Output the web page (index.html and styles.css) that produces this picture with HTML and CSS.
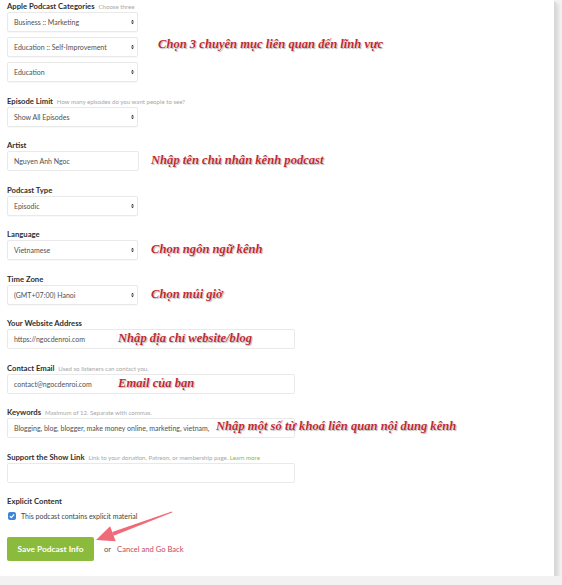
FILE: index.html
```html
<!DOCTYPE html>
<html lang="vi">

<head>
    <meta charset="UTF-8">
    <meta name="viewport" content="width=device-width, initial-scale=1.0">
    <title>Podcast Info</title>
    <link rel="stylesheet" href="styles.css">
</head>

<body>
    <div class="card">
        <form class="podcast-form">
            <!-- Categories -->
            <div class="field field-categories">
                <div class="label">Apple Podcast Categories <span class="hint">Choose three</span></div>
                <div class="select-stack">
                    <div class="select">
                        <span class="value">Business :: Marketing</span>
                        <svg class="arrows" viewBox="0 0 4 6"><path d="M2 0L4 2.3H0Z M2 6L4 3.7H0Z" /></svg>
                    </div>
                    <div class="select">
                        <span class="value">Education :: Self-Improvement</span>
                        <svg class="arrows" viewBox="0 0 4 6"><path d="M2 0L4 2.3H0Z M2 6L4 3.7H0Z" /></svg>
                    </div>
                    <div class="select">
                        <span class="value">Education</span>
                        <svg class="arrows" viewBox="0 0 4 6"><path d="M2 0L4 2.3H0Z M2 6L4 3.7H0Z" /></svg>
                    </div>
                </div>
                <span class="note note-cat">Chọn 3 chuyên mục liên quan đến lĩnh vực</span>
            </div>

            <div class="field">
                <div class="label">Episode Limit <span class="hint">How many episodes do you want people to see?</span></div>
                <div class="select">
                    <span class="value">Show All Episodes</span>
                    <svg class="arrows" viewBox="0 0 4 6"><path d="M2 0L4 2.3H0Z M2 6L4 3.7H0Z" /></svg>
                </div>
            </div>

            <div class="field">
                <div class="label">Artist</div>
                <div class="input short">Nguyen Anh Ngoc</div>
                <span class="note note-side">Nhập tên chủ nhân kênh podcast</span>
            </div>

            <div class="field">
                <div class="label">Podcast Type</div>
                <div class="select">
                    <span class="value">Episodic</span>
                    <svg class="arrows" viewBox="0 0 4 6"><path d="M2 0L4 2.3H0Z M2 6L4 3.7H0Z" /></svg>
                </div>
            </div>

            <div class="field">
                <div class="label">Language</div>
                <div class="select">
                    <span class="value">Vietnamese</span>
                    <svg class="arrows" viewBox="0 0 4 6"><path d="M2 0L4 2.3H0Z M2 6L4 3.7H0Z" /></svg>
                </div>
                <span class="note note-side">Chọn ngôn ngữ kênh</span>
            </div>

            <div class="field">
                <div class="label">Time Zone</div>
                <div class="select">
                    <span class="value">(GMT+07:00) Hanoi</span>
                    <svg class="arrows" viewBox="0 0 4 6"><path d="M2 0L4 2.3H0Z M2 6L4 3.7H0Z" /></svg>
                </div>
                <span class="note note-side">Chọn múi giờ</span>
            </div>

            <div class="field">
                <div class="label">Your Website Address</div>
                <div class="input">https://ngocdenroi.com</div>
                <span class="note note-in">Nhập địa chỉ website/blog</span>
            </div>

            <div class="field">
                <div class="label">Contact Email <span class="hint">Used so listeners can contact you.</span></div>
                <div class="input">contact@ngocdenroi.com</div>
                <span class="note note-in">Email của bạn</span>
            </div>

            <div class="field">
                <div class="label">Keywords <span class="hint">Maximum of 12. Separate with commas.</span></div>
                <div class="input">Blogging, blog, blogger, make money online, marketing, vietnam,</div>
                <span class="note note-kw">Nhập một số từ khoá liên quan nội dung kênh</span>
            </div>

            <div class="field">
                <div class="label">Support the Show Link <span class="hint">Link to your donation, Patreon, or membership page. <a class="learn">Learn more</a></span></div>
                <div class="input"></div>
            </div>

            <div class="field field-explicit">
                <div class="label">Explicit Content</div>
                <div class="check-row">
                    <span class="checkbox">
                        <svg viewBox="0 0 8 8"><path d="M1.8 4.1L3.3 5.6L6.2 2.4" /></svg>
                    </span>
                    This podcast contains explicit material
                </div>
            </div>

            <div class="actions">
                <button type="button" class="save-btn">Save Podcast Info</button>
                <span class="or">or</span>
                <a class="cancel">Cancel and Go Back</a>
            </div>
        </form>

        <!-- annotation arrow -->
        <svg class="pointer" viewBox="0 0 562 585">
            <polygon points="172.2,512.5 171.8,511.5 112.2,531.9 113.6,535.7" />
            <polygon points="96,540 110.1,526.3 115.7,541.3" />
        </svg>
    </div>
</body>

</html>
```

FILE: styles.css
```css
/* General */
body {
    margin: 0;
    padding: 0;
    background: #f2f2f2;
    font-family: "Lato", "Noto Sans", sans-serif;
    color: #333;
}

.card {
    position: relative;
    width: 554px;
    height: 576px;
    background: #fff;
    box-shadow: 2px 2px 0 #d9d9d9, 4px 4px 4px rgba(0, 0, 0, 0.12);
}

.podcast-form {
    padding: 1px 0 0 7px;
}

/* Fields */
.field {
    position: relative;
    margin-bottom: 13.5px;
}

.label {
    height: 10px;
    line-height: 10px;
    margin-bottom: 1px;
    font-size: 7.7px;
    font-weight: bold;
    color: #2f2f2f;
    white-space: nowrap;
}

.hint {
    margin-left: 2px;
    font-size: 6.1px;
    font-weight: normal;
    color: #a8a8a8;
}

.learn {
    color: #8ab848;
}

.select-stack {
    display: flex;
    flex-direction: column;
    gap: 5px;
}

.select,
.input {
    box-sizing: border-box;
    height: 20px;
    line-height: 18px;
    padding: 0 6px;
    border: 1px solid #e9e9e9;
    border-radius: 2px;
    font-size: 7px;
    color: #505050;
    white-space: nowrap;
    overflow: hidden;
}

.select {
    position: relative;
    width: 131px;
    box-shadow: 0 1px 1px rgba(0, 0, 0, 0.03);
}

.select .arrows {
    position: absolute;
    right: 3px;
    top: 6px;
    width: 3px;
    height: 6px;
    fill: #333;
}

.input {
    width: 288px;
}

.input.short {
    width: 132px;
}

/* Annotations */
.note {
    position: absolute;
    top: 13px;
    line-height: 14px;
    font-family: "Liberation Serif", "DejaVu Serif", serif;
    font-style: italic;
    font-weight: bold;
    font-size: 12.6px;
    color: #bf2a30;
    white-space: nowrap;
    text-shadow: 0 0 1px #fff, 1px 1px 1px rgba(0, 0, 0, 0.3);
}

.note-cat {
    top: 36px;
    left: 151px;
}

.note-side {
    left: 144px;
}

.note-in {
    left: 111px;
}

.note-kw {
    left: 209px;
    top: 12px;
}

/* Explicit content */
.field-explicit {
    margin-bottom: 16px;
}

.check-row {
    display: flex;
    align-items: center;
    gap: 5px;
    margin-top: 5px;
    height: 10px;
    font-size: 7px;
    color: #444;
}

.checkbox {
    display: inline-block;
    width: 8px;
    height: 8px;
    margin-left: 1px;
    border-radius: 2px;
    background: #3d85d6;
}

.checkbox svg {
    display: block;
    width: 8px;
    height: 8px;
    fill: none;
    stroke: #fff;
    stroke-width: 1.2;
}

/* Actions */
.actions {
    display: flex;
    align-items: center;
}

.save-btn {
    width: 87px;
    height: 24px;
    padding: 0;
    border: none;
    border-radius: 2px;
    background: #8bbb3c;
    color: #fff;
    font-family: "Lato", sans-serif;
    font-weight: bold;
    font-size: 8.4px;
}

.or {
    margin-left: 10px;
    font-size: 7.6px;
    color: #555;
}

.cancel {
    margin-left: 6px;
    font-size: 7.6px;
    color: #c4495a;
}

.pointer {
    position: absolute;
    left: 0;
    top: 0;
    width: 562px;
    height: 585px;
    fill: #ef6b77;
    pointer-events: none;
}
```
